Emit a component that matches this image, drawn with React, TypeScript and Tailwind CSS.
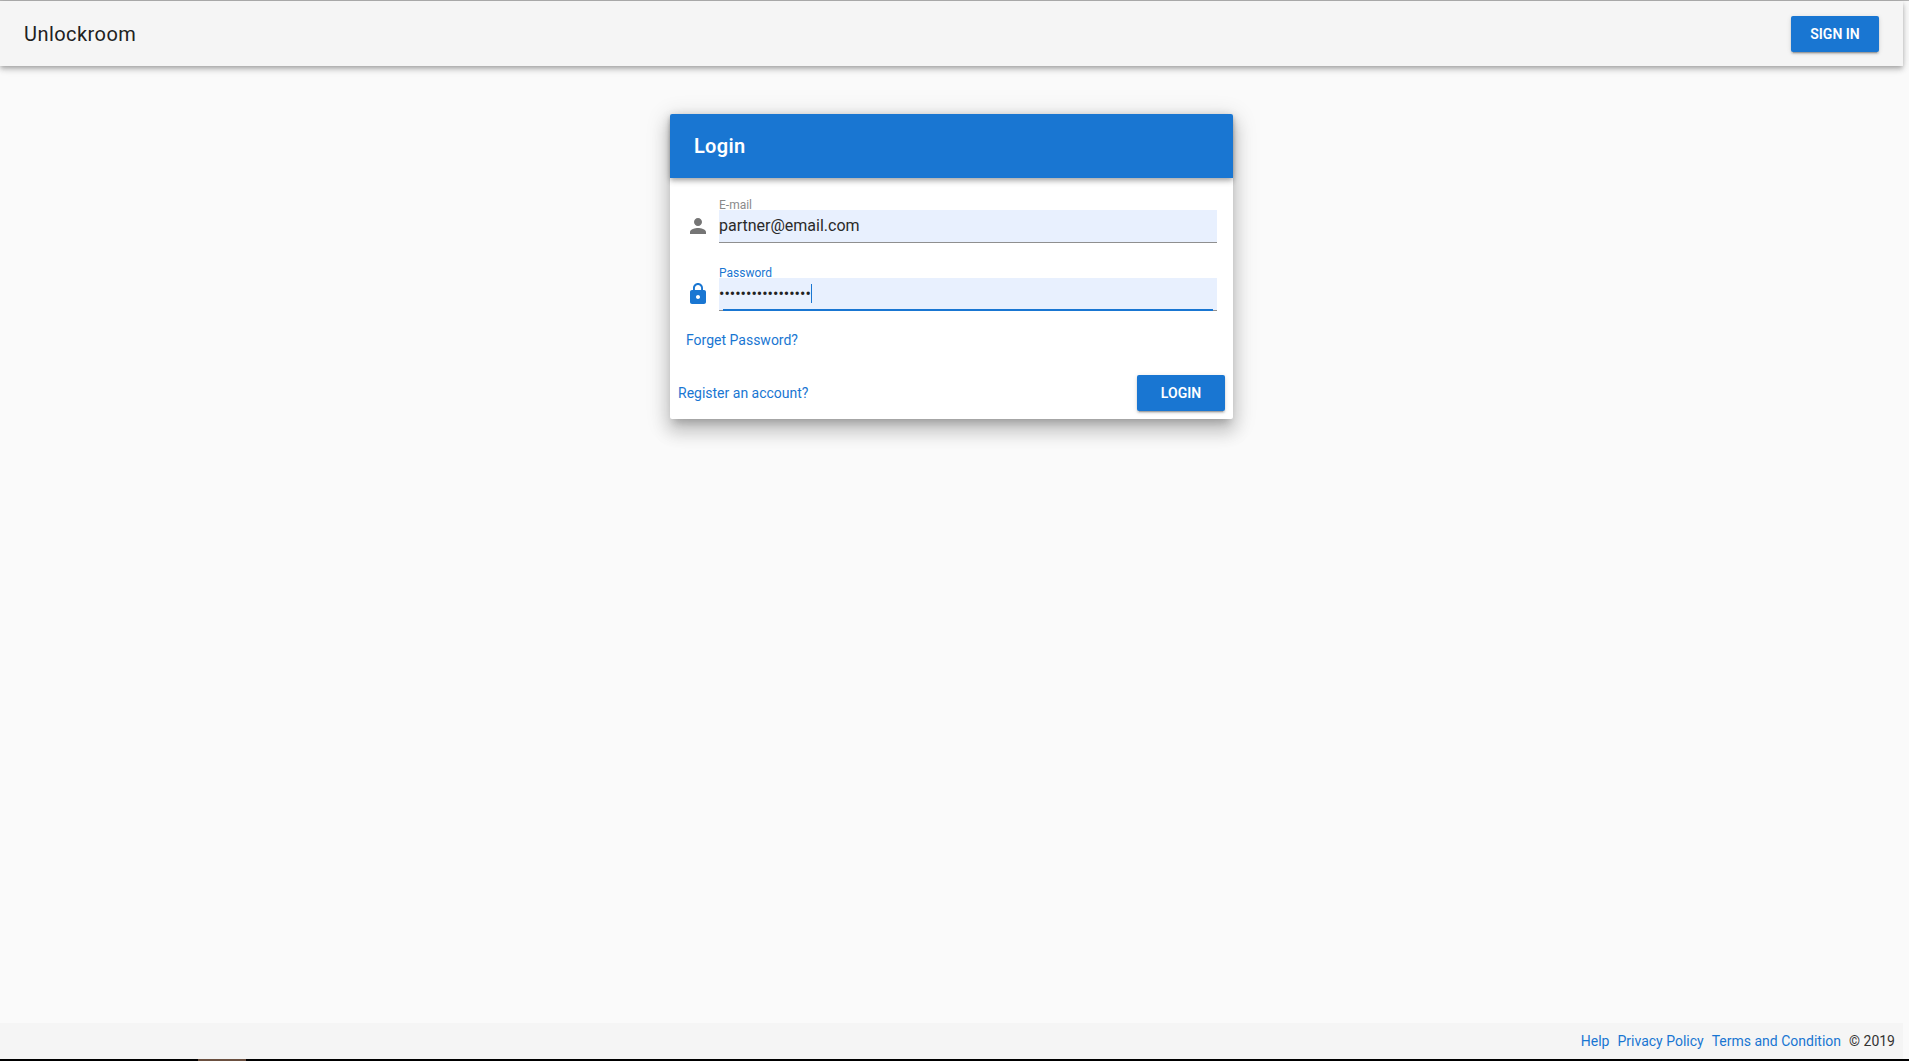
import React from "react";

const font = { fontFamily: "Roboto, 'Liberation Sans', sans-serif" };

function UserIcon() {
  return (
    <svg viewBox="0 0 24 24" className="w-6 h-6 fill-[#757575]">
      <path d="M12 12c2.21 0 4-1.79 4-4s-1.79-4-4-4-4 1.79-4 4 1.79 4 4 4zm0 2c-2.67 0-8 1.34-8 4v2h16v-2c0-2.66-5.33-4-8-4z" />
    </svg>
  );
}

function LockIcon() {
  return (
    <svg viewBox="0 0 24 24" className="w-6 h-6 fill-[#1976d2]">
      <path d="M18 8h-1V6c0-2.76-2.24-5-5-5S7 3.24 7 6v2H6c-1.1 0-2 .9-2 2v10c0 1.1.9 2 2 2h12c1.1 0 2-.9 2-2V10c0-1.1-.9-2-2-2zm-6 9c-1.1 0-2-.9-2-2s.9-2 2-2 2 .9 2 2-.9 2-2 2zm3.1-9H8.9V6c0-1.71 1.39-3.1 3.1-3.1 1.71 0 3.1 1.39 3.1 3.1v2z" />
    </svg>
  );
}

export default function App() {
  return (
    <div style={font} className="h-[1061px] w-full flex flex-col overflow-hidden bg-[#fafafa]">
      <div className="h-px shrink-0 bg-[#b4b4b4]" />
      <div className="flex-1 min-h-0 flex">
        <div className="flex-1 min-w-0 flex flex-col">
          <header className="relative z-10 h-[65px] shrink-0 flex items-center justify-between pl-6 pr-6 bg-[#f5f5f5] shadow-[0_2px_4px_-1px_rgba(0,0,0,0.2),0_4px_5px_0_rgba(0,0,0,0.14),0_1px_10px_0_rgba(0,0,0,0.12)]">
            <span className="text-[20px] font-normal tracking-[0.45px] text-[#212121]">Unlockroom</span>
            <button className="w-[88px] h-9 pt-[2px] rounded-[2px] bg-[#1976d2] text-white text-[14px] font-semibold shadow-[0_3px_1px_-2px_rgba(0,0,0,0.2),0_2px_2px_0_rgba(0,0,0,0.14),0_1px_5px_0_rgba(0,0,0,0.12)]">
              SIGN IN
            </button>
          </header>

          <main className="flex-1 min-h-0 flex justify-center items-start pt-[48px]">
            <div className="w-[563px] bg-white rounded-[2px] shadow-[0_7px_8px_-4px_rgba(0,0,0,0.2),0_12px_17px_2px_rgba(0,0,0,0.14),0_5px_22px_4px_rgba(0,0,0,0.12)]">
              <div className="h-16 flex items-center px-6 bg-[#1976d2] rounded-t-[2px] shadow-[0_2px_4px_-1px_rgba(0,0,0,0.2),0_4px_5px_0_rgba(0,0,0,0.14),0_1px_10px_0_rgba(0,0,0,0.12)]">
                <span className="text-[20px] font-semibold tracking-[0.3px] text-white">Login</span>
              </div>

              <div className="pt-[32px] pl-4 pr-4">
                <div className="flex items-center h-[33px]">
                  <span className="w-6 flex justify-center mr-[9px] mb-[2px]"><UserIcon /></span>
                  <div className="relative flex-1">
                    <label className="absolute left-0 top-[-12px] text-[12px] leading-[14px] text-[#8a8a8a]">E-mail</label>
                    <input
                      readOnly
                      value="partner@email.com"
                      className="block w-full h-[33px] pb-[2px] bg-[#e8f0fe] border-b border-[#8f8f8f] text-[16px] text-[#2a2a2a] outline-none"
                    />
                  </div>
                </div>

                <div className="flex items-center h-[33px] mt-[35px]">
                  <span className="w-6 flex justify-center mr-[9px] mb-[2px]"><LockIcon /></span>
                  <div className="relative flex-1">
                    <label className="absolute left-0 top-[-12px] text-[12px] leading-[14px] text-[#1976d2]">Password</label>
                    <input
                      readOnly
                      type="password"
                      value="partnerpassword12"
                      className="block w-full h-[33px] pb-[2px] bg-[#e8f0fe] border-b border-[#8f8f8f] text-[16px] text-[#212121] outline-none"
                    />
                    <span className="absolute left-[92px] top-[6px] w-px h-[19px] bg-[#1976d2]" />
                    <span className="absolute left-[4px] right-[4px] bottom-0 h-[2px] bg-[#1976d2]" />
                  </div>
                </div>

                <a className="block mt-[21px] text-[14px] leading-4 text-[#1976d2]">Forget Password?</a>
              </div>

              <div className="flex items-center justify-between pt-[27px] pb-[8px] pl-2 pr-2">
                <a className="text-[14px] text-[#1976d2]">Register an account?</a>
                <button className="w-[88px] h-9 pt-[1px] rounded-[2px] bg-[#1976d2] text-white text-[14px] font-semibold shadow-[0_3px_1px_-2px_rgba(0,0,0,0.2),0_2px_2px_0_rgba(0,0,0,0.14),0_1px_5px_0_rgba(0,0,0,0.12)]">
                  LOGIN
                </button>
              </div>
            </div>
          </main>

          <footer className="h-[36px] shrink-0 flex items-center justify-end pr-[8px] bg-[#f5f5f5] text-[14px]">
            <a className="text-[#1976d2] mr-2">Help</a>
            <a className="text-[#1976d2] mr-2">Privacy Policy</a>
            <a className="text-[#1976d2] mr-2">Terms and Condition</a>
            <span className="text-[#333333]">© 2019</span>
          </footer>
        </div>
        <div className="w-[6px] shrink-0 bg-[#fafafa]" />
      </div>
      <div className="h-[2px] shrink-0 bg-black">
        <div className="ml-[198px] w-[48px] h-full bg-[#6b5040]" />
      </div>
    </div>
  );
}
